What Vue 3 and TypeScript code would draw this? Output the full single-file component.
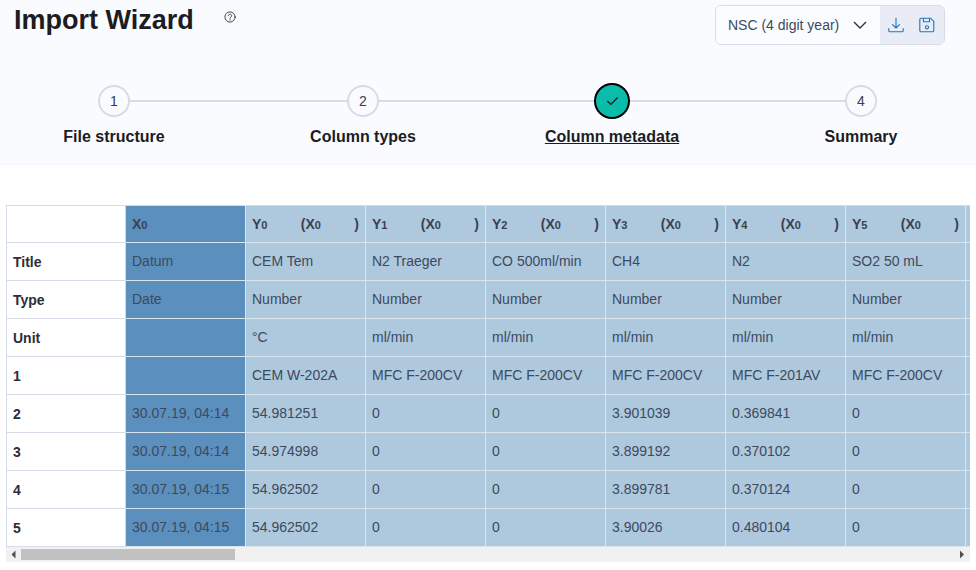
<script setup lang="ts">
interface Step {
  label: string
  active?: boolean
}

const steps: Step[] = [
  { label: 'File structure' },
  { label: 'Column types' },
  { label: 'Column metadata', active: true },
  { label: 'Summary' },
]

const visible = [
  ['Datum', 'Date', '', '', '30.07.19, 04:14', '30.07.19, 04:14', '30.07.19, 04:15', '30.07.19, 04:15'],
  ['CEM Tem', 'Number', '°C', 'CEM W-202A', '54.981251', '54.974998', '54.962502', '54.962502'],
  ['N2 Traeger', 'Number', 'ml/min', 'MFC F-200CV', '0', '0', '0', '0'],
  ['CO 500ml/min', 'Number', 'ml/min', 'MFC F-200CV', '0', '0', '0', '0'],
  ['CH4', 'Number', 'ml/min', 'MFC F-200CV', '3.901039', '3.899192', '3.899781', '3.90026'],
  ['N2', 'Number', 'ml/min', 'MFC F-201AV', '0.369841', '0.370102', '0.370124', '0.480104'],
  ['SO2 50 mL', 'Number', 'ml/min', 'MFC F-200CV', '0', '0', '0', '0'],
]

// the rest of the columns sit past the scroll edge
const columns: string[][] = Array.from({ length: 34 }, (_, i) => visible[i] ?? visible[2])
const rowLabels = ['Title', 'Type', 'Unit', '1', '2', '3', '4', '5']

const colWidth = 120
const viewWidth = 964
const trackWidth = viewWidth - 30
const tableWidth = colWidth * (columns.length + 1)
const thumbWidth = (viewWidth / tableWidth) * trackWidth
</script>

<template>
  <div class="page">
    <header class="top">
      <div class="title-row">
        <div class="title-wrap">
          <h1 class="title">Import Wizard</h1>
          <svg class="help" viewBox="0 0 24 24" fill="none" stroke="currentColor" stroke-width="1.8" stroke-linecap="round">
            <circle cx="12" cy="12" r="10.2" />
            <path d="M8.8 9.4a3.2 3.2 0 1 1 4.9 2.7c-1.1.7-1.7 1.3-1.7 2.6" />
            <path d="M12 17.6v.2" stroke-width="2.2" />
          </svg>
        </div>
        <div class="picker">
          <div class="picker-select">
            <span>NSC (4 digit year)</span>
            <svg class="chevron" viewBox="0 0 14 8" fill="none" stroke="currentColor" stroke-width="1.4">
              <path d="M1 1l6 6 6-6" />
            </svg>
          </div>
          <div class="picker-actions">
            <svg class="action" viewBox="0 0 16 16" fill="none" stroke="currentColor" stroke-width="1.1" stroke-linecap="round" stroke-linejoin="round">
              <path d="M8 1v10M4.5 7.6L8 11l3.5-3.4" />
              <path d="M.8 11.5v2.2c0 .7.5 1.1 1.1 1.1h12.2c.6 0 1.1-.4 1.1-1.1v-2.2" />
            </svg>
            <svg class="action" viewBox="0 0 16 16" fill="none" stroke="currentColor" stroke-width="1.1" stroke-linejoin="round">
              <path d="M2 1.2h9.6l3.2 3.2v9.2c0 .7-.5 1.2-1.2 1.2H2c-.7 0-1.2-.5-1.2-1.2V2.4C.8 1.7 1.3 1.2 2 1.2z" />
              <path d="M4.5 1.2v3.6h6V1.2" />
              <circle cx="8" cy="10.3" r="1.6" />
            </svg>
          </div>
        </div>
      </div>

      <ol class="stepper">
        <li v-for="(step, i) in steps" :key="step.label" class="step">
          <span v-if="i < steps.length - 1" class="connector"></span>
          <span class="circle-box">
            <span v-if="step.active" class="circle circle-active">
              <svg class="check" viewBox="0 0 14 10" fill="none" stroke="currentColor" stroke-width="1.4">
                <path d="M1.5 5l3.7 3.6 7.3-7.3" />
              </svg>
            </span>
            <span v-else class="circle">{{ i + 1 }}</span>
          </span>
          <span class="step-label" :class="{ 'step-label-active': step.active }">{{ step.label }}</span>
        </li>
      </ol>
    </header>

    <div class="table-box">
      <div class="table-wrap">
        <table class="grid" :style="{ width: tableWidth + 'px' }">
          <thead>
            <tr>
              <th class="row-head"></th>
              <th v-for="(_, c) in columns" :key="c" class="col-head" :class="{ 'x-col': c === 0 }">
                <div v-if="c === 0" class="axis">
                  <span>X<small>0</small></span>
                </div>
                <div v-else class="axis">
                  <span>Y<small>{{ c - 1 }}</small></span>
                  <span>(X<small>0</small></span>
                  <span>)</span>
                </div>
              </th>
            </tr>
          </thead>
          <tbody>
            <tr v-for="(label, r) in rowLabels" :key="label">
              <th class="row-head">{{ label }}</th>
              <td v-for="(col, c) in columns" :key="c" :class="{ 'x-col': c === 0 }">{{ col[r] }}</td>
            </tr>
          </tbody>
        </table>
      </div>
      <div class="scrollbar">
        <svg class="arrow" viewBox="0 0 15 15"><path d="M5.5 7.5l4-4v8z" /></svg>
        <div class="track">
          <div class="thumb" :style="{ width: thumbWidth + 'px' }"></div>
        </div>
        <svg class="arrow" viewBox="0 0 15 15"><path d="M9 7.5l-4-4v8z" /></svg>
      </div>
    </div>
  </div>
</template>

<style scoped>
.page {
  font-family: "Liberation Sans", Arial, sans-serif;
  color: #1c1c22;
}

.top {
  height: 164px;
  background: #f9fbff;
  border-bottom: 1px solid #f4f5f9;
}

.title-row {
  display: flex;
  justify-content: space-between;
  padding: 5px 31px 0 14px;
}

.title-wrap {
  display: flex;
  align-items: flex-start;
}

.title {
  margin: -1px 0 0;
  font-size: 27px;
  line-height: 32px;
  font-weight: 700;
}

.help {
  width: 12px;
  height: 12px;
  margin: 6px 0 0 30px;
  color: #333;
}

.picker {
  display: flex;
  width: 230px;
  height: 40px;
  box-sizing: border-box;
  border: 1px solid #d5dbe8;
  border-radius: 6px;
  overflow: hidden;
}

.picker-select {
  flex: 1;
  display: flex;
  align-items: center;
  justify-content: space-between;
  padding: 0 13px 0 12px;
  background: #fbfcff;
  font-size: 14px;
  color: #3d4a5c;
}

.chevron {
  width: 14px;
  height: 8px;
  color: #333;
}

.picker-actions {
  width: 64px;
  display: flex;
  align-items: center;
  justify-content: space-between;
  padding: 0 9px 0 8px;
  box-sizing: border-box;
  background: #e9ecf4;
}

.action {
  width: 16px;
  height: 16px;
  color: #1a78c2;
}

.stepper {
  list-style: none;
  margin: 38px 0 0;
  padding: 0 65px 0 64px;
  display: flex;
  justify-content: space-between;
}

.step {
  position: relative;
  width: 100px;
  display: flex;
  flex-direction: column;
  align-items: center;
}

.connector {
  position: absolute;
  left: 50%;
  top: 17px;
  width: 249px;
  height: 2px;
  background: #d5dbe8;
}

.circle-box {
  position: relative;
  height: 36px;
  display: flex;
  align-items: center;
}

.circle {
  width: 32px;
  height: 32px;
  box-sizing: border-box;
  border: 2px solid #d5dbe8;
  border-radius: 50%;
  background: #f9fbff;
  display: flex;
  align-items: center;
  justify-content: center;
  font-size: 14px;
  color: #3a3f4c;
}

.circle-active {
  width: 36px;
  height: 36px;
  border-color: #000;
  background: #0bbcab;
  color: #1c1c22;
}

.check {
  width: 13px;
  height: 10px;
}

.step-label {
  margin-top: 9px;
  font-size: 16px;
  line-height: 18px;
  font-weight: 700;
  white-space: nowrap;
}

.step-label-active {
  text-decoration: underline;
}

.table-box {
  width: 964px;
  margin: 40px 0 0 6px;
}

.table-wrap {
  overflow-x: hidden;
}

.scrollbar {
  display: flex;
  height: 15px;
  background: #f1f1f1;
}

.arrow {
  width: 15px;
  height: 15px;
  fill: #505050;
  flex: none;
}

.track {
  flex: 1;
  padding: 2px 0;
  box-sizing: border-box;
}

.thumb {
  height: 11px;
  background: #c1c1c1;
}

.grid {
  border-collapse: separate;
  border-spacing: 0;
  table-layout: fixed;
  font-size: 14px;
}

.grid th,
.grid td {
  box-sizing: border-box;
  width: 120px;
  height: 38px;
  padding: 0 6px;
  text-align: left;
  white-space: nowrap;
  overflow: hidden;
  border-right: 1px solid #d8e4ee;
  border-bottom: 1px solid #d8e4ee;
  background: #aec8de;
  color: #3d4a5c;
}

.grid td {
  padding-bottom: 2px;
}

.grid thead th {
  border-top: 1px solid #d5dbe8;
  color: #3a4150;
}

.grid .row-head {
  background: #fff;
  color: #2e2e36;
  border-color: #d5dbe8;
  font-weight: 700;
}

.grid tr > .row-head {
  border-left: 1px solid #d5dbe8;
}

.grid .x-col {
  background: #5b8fbe;
}

.axis {
  display: flex;
  justify-content: space-between;
}

.axis small {
  font-size: 11px;
}
</style>

<style>
html,
body {
  background: #fff;
}
</style>
